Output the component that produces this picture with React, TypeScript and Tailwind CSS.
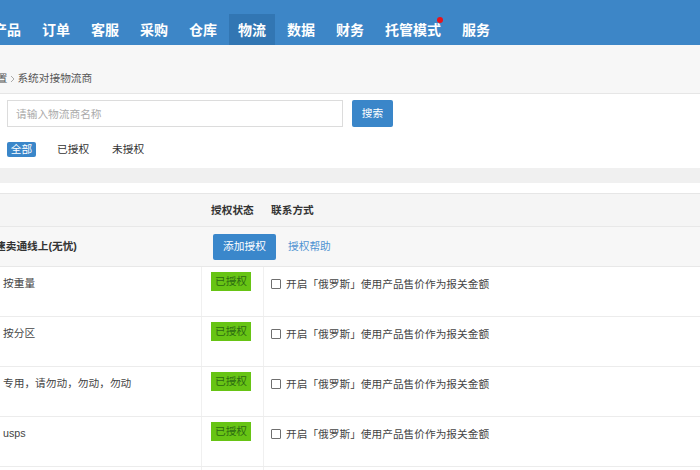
import React from "react";

const navItems = ["产品", "订单", "客服", "采购", "仓库", "物流", "数据", "财务", "托管模式", "服务"];

const rows = ["按重量", "按分区", "专用，请勿动，勿动，勿动", "usps", "按件数"];

const Checkbox = () => (
  <span className="mr-[5px] inline-block h-[10px] w-[10px] rounded-[1px] border border-[#6f6f6f] bg-white" />
);

const App = () => {
  return (
    <div className="h-[470px] w-[700px] overflow-hidden bg-[#f0f0f0] font-['Liberation_Sans','Noto_Sans_CJK_SC',sans-serif] text-[10.7px] text-[#333]">
      {/* Top nav */}
      <div className="h-[45px] bg-[#3d86c7]">
        <div className="ml-[-16px] flex h-[45px] items-end gap-[3px]">
          {navItems.map((item) => (
            <div
              key={item}
              className={`flex h-[31px] items-center px-[9px] text-[14px] font-bold text-white ${
                item === "物流" ? "bg-[#3276b3]" : ""
              }`}
            >
              <span className="relative leading-[20px]">
                {item}
                {item === "托管模式" && (
                  <span className="absolute right-[-2px] top-[-3px] h-[6px] w-[6px] rounded-full bg-[#e8131b]" />
                )}
              </span>
            </div>
          ))}
        </div>
      </div>

      {/* Breadcrumb */}
      <div className="flex h-[49px] items-start border-b border-[#e6e6e6] bg-[#f7f7f7] pt-[25px] leading-[17px] text-[#555]">
        <span className="ml-[-14px]">设置</span>
        <svg className="ml-[3px] mt-[5px]" width="5" height="8" viewBox="0 0 5 8">
          <path d="M1 1l3 3-3 3" fill="none" stroke="#aaa" strokeWidth="1" />
        </svg>
        <span className="ml-[2px]">系统对接物流商</span>
      </div>

      {/* Search panel */}
      <div className="bg-white px-[7px] pb-[11px] pt-[6px]">
        <div className="flex items-center">
          <input
            className="h-[27px] w-[336px] border border-[#dcdcdc] px-[8px] text-[10.7px] outline-none placeholder:text-[#aaa]"
            placeholder="请输入物流商名称"
          />
          <button
            type="button"
            className="ml-[9px] h-[27px] w-[41px] rounded-[2px] bg-[#3a86c9] text-[10.7px] text-white"
          >
            搜索
          </button>
        </div>
        <div className="mt-[15px] flex h-[15px] items-center leading-[15px]">
          <span className="w-[29px] rounded-[2px] bg-[#3a86c9] text-center text-white">全部</span>
          <span className="ml-[21px]">已授权</span>
          <span className="ml-[23px]">未授权</span>
        </div>
      </div>

      <div className="h-[15px]" />
      <div className="h-[11px] border-b border-[#e6e6e6] bg-white" />

      {/* Table header */}
      <div className="flex h-[33px] items-center border-b border-[#e8e8e8] bg-[#f5f5f5] font-bold text-[#333]">
        <div className="w-[202px]" />
        <div className="w-[62px] pl-[9px]">授权状态</div>
        <div className="pl-[7px]">联系方式</div>
      </div>

      {/* Group row */}
      <div className="flex h-[40px] items-center border-b border-[#e8e8e8] bg-[#f7f7f7]">
        <div className="w-[202px] font-bold text-[#333]">
          <span className="ml-[-5px]">速卖通线上(无忧)</span>
        </div>
        <div className="flex items-center pl-[11px]">
          <button
            type="button"
            className="h-[26px] w-[63px] rounded-[2px] bg-[#3a87cb] text-[10.7px] text-white"
          >
            添加授权
          </button>
          <span className="ml-[12px] text-[#4f93d2]">授权帮助</span>
        </div>
      </div>

      {/* Data rows */}
      <div className="bg-white">
        {rows.map((name) => (
          <div key={name} className="flex h-[50px] border-b border-[#ececec] text-[#444]">
            <div className="w-[202px] border-r border-[#f0f0f0] pl-[3px] pt-[8px] leading-[17px]">{name}</div>
            <div className="w-[62px] border-r border-[#f0f0f0] pl-[9px] pt-[5px]">
              <span className="block h-[19px] w-[40px] bg-[#67c414] text-center leading-[19px] text-[#2c6a12]">
                已授权
              </span>
            </div>
            <div className="flex h-[34px] items-center pl-[7px]">
              <Checkbox />
              <span>开启「俄罗斯」使用产品售价作为报关金额</span>
            </div>
          </div>
        ))}
      </div>
    </div>
  );
};

export default App;
